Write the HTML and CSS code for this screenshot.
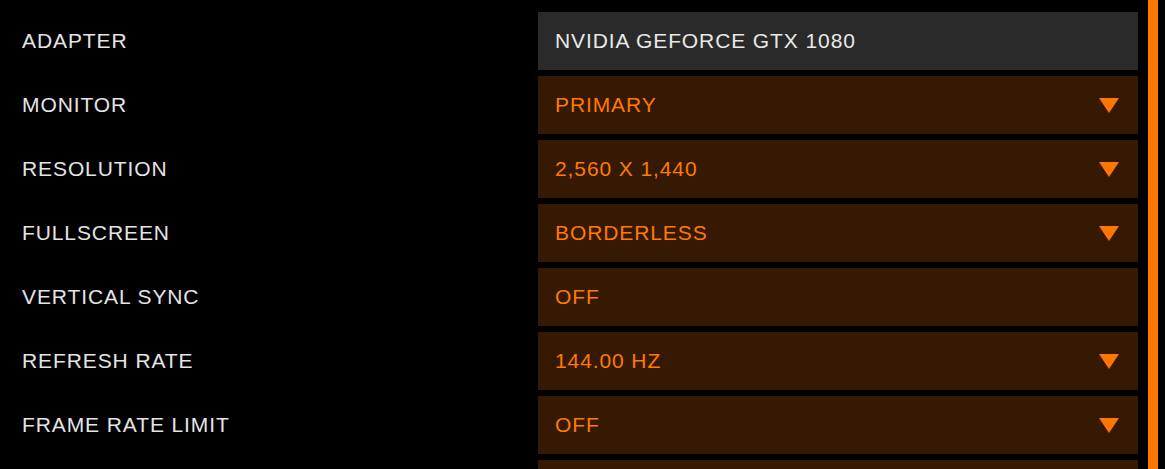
FILE: index.html
```html
<!DOCTYPE html>
<html>
<head>
<meta charset="utf-8">
<link rel="stylesheet" href="styles.css">
</head>
<body>
<div class="panel">
  <div class="rows">
    <div class="row"><div class="label">ADAPTER</div><div class="field field-static"><span class="value">NVIDIA GEFORCE GTX 1080</span></div></div>
    <div class="row"><div class="label">MONITOR</div><div class="field"><span class="value">PRIMARY</span><span class="arrow"></span></div></div>
    <div class="row"><div class="label">RESOLUTION</div><div class="field"><span class="value">2,560 X 1,440</span><span class="arrow"></span></div></div>
    <div class="row"><div class="label">FULLSCREEN</div><div class="field"><span class="value">BORDERLESS</span><span class="arrow"></span></div></div>
    <div class="row"><div class="label">VERTICAL SYNC</div><div class="field"><span class="value">OFF</span></div></div>
    <div class="row"><div class="label">REFRESH RATE</div><div class="field"><span class="value">144.00 HZ</span><span class="arrow"></span></div></div>
    <div class="row"><div class="label">FRAME RATE LIMIT</div><div class="field"><span class="value">OFF</span><span class="arrow"></span></div></div>
    <div class="row row-cut"><div class="label"></div><div class="field"></div></div>
  </div>
  <div class="scrollbar"></div>
</div>
</body>
</html>
```

FILE: styles.css
```css
html, body {
  margin: 0;
  padding: 0;
  background: #000;
  height: 469px;
  overflow: hidden;
}
.panel {
  display: flex;
  height: 469px;
  overflow: hidden;
  font-family: "Liberation Sans", Arial, sans-serif;
}
.rows {
  display: flex;
  flex-direction: column;
  gap: 6px;
  padding-top: 12px;
  width: 1138px;
  height: 469px;
  box-sizing: border-box;
  overflow: hidden;
}
.row {
  display: flex;
  height: 58px;
  flex-shrink: 0;
}
.row-cut {
  height: 9px;
}
.label {
  width: 516px;
  padding-left: 22px;
  display: flex;
  align-items: center;
  color: #e4e4e4;
  font-size: 21px;
  letter-spacing: 0.9px;
}
.field {
  width: 600px;
  background: #351903;
  display: flex;
  align-items: center;
  justify-content: space-between;
  padding: 0 19px 0 17px;
  box-sizing: border-box;
}
.field-static {
  background: #2a2a2a;
}
.field-static .value {
  color: #e8e8e8;
}
.value {
  color: #ff7a00;
  font-size: 21px;
  letter-spacing: 0.9px;
}
.arrow {
  width: 0;
  height: 0;
  border-left: 10px solid transparent;
  border-right: 10px solid transparent;
  border-top: 15px solid #ff7700;
}
.scrollbar {
  width: 10px;
  margin-left: 10px;
  background: #ff7700;
  height: 469px;
}
```
